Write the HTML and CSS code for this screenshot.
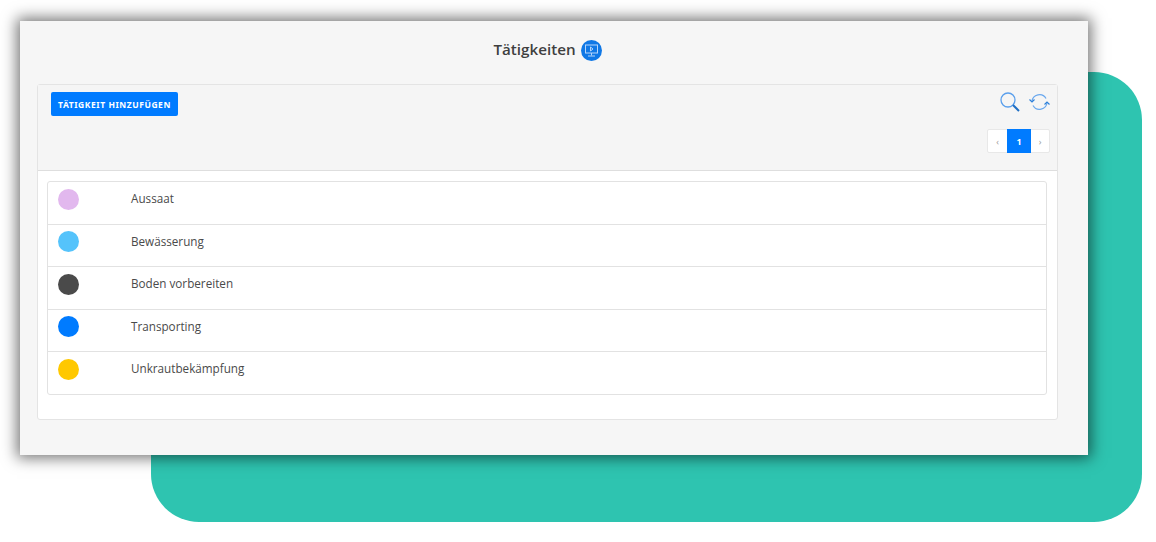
FILE: index.html
```html
<!DOCTYPE html>
<html lang="de">
<head>
    <meta charset="UTF-8">
    <title>Tätigkeiten</title>
    <link rel="stylesheet" href="styles.css">
</head>
<body>
    <div class="backdrop"></div>
    <div class="window">
        <h1 class="title">
            Tätigkeiten
            <span class="title-icon">
                <svg width="15" height="15" viewBox="0 0 15 15" fill="none" stroke="#b5d5fb" stroke-width="1">
                    <rect x="1.5" y="2" width="12" height="8"/>
                    <path d="M6.5 4l2.5 2-2.5 2zM7.5 10v2.5M4 13h7"/>
                </svg>
            </span>
        </h1>
        <div class="panel">
            <div class="panel-head">
                <button class="btn-add">TÄTIGKEIT HINZUFÜGEN</button>
                <div class="tools">
                    <div class="tool-icons">
                        <svg width="20" height="20" viewBox="0 0 20 20" fill="none" stroke="#5a9fec" stroke-width="1.3">
                            <circle cx="8" cy="8" r="7"/>
                            <path d="M13 13l6 6" stroke="#1f6fc4" stroke-width="2"/>
                        </svg>
                        <svg width="21" height="18" viewBox="0 0 21 18" fill="none" stroke="#6aa8ee" stroke-width="1.2">
                            <path d="M3 8.500a7.500 7.500 0 0 1 14-3M18 9.500a7.500 7.500 0 0 1-14 3"/>
                            <path d="M0.500 6.500l2.500 2.500 2.500-2.500M15.500 11.500l2.500-2.500 2.500 2.500" stroke="#2f80d8"/>
                        </svg>
                    </div>
                    <ul class="pager">
                        <li>‹</li>
                        <li class="current">1</li>
                        <li>›</li>
                    </ul>
                </div>
            </div>
            <div class="panel-body">
                <ul class="list">
                    <li><span class="dot dot-lilac"></span>Aussaat</li>
                    <li><span class="dot dot-sky"></span>Bewässerung</li>
                    <li><span class="dot dot-dark"></span>Boden vorbereiten</li>
                    <li><span class="dot dot-blue"></span>Transporting</li>
                    <li><span class="dot dot-yellow"></span>Unkrautbekämpfung</li>
                </ul>
            </div>
        </div>
    </div>
</body>
</html>
```

FILE: styles.css
```css
*{
    margin: 0;
    padding: 0;
    box-sizing: border-box;
}

ul{
    list-style-type: none;
}

html, body{
    height: 100%;
    overflow: hidden;
}

body{
    background: #ffffff;
    font-family: "Open Sans", "Liberation Sans", sans-serif;
    color: #4a4a4a;
    position: relative;
}

/* teal block behind the window */
.backdrop{
    position: absolute;
    left: 151px;
    top: 72px;
    width: 991px;
    height: 450px;
    background: #2ec4b0;
    border-radius: 48px;
}

.window{
    position: relative;
    width: 1068px;
    height: 434px;
    margin: 21px 0 0 20px;
    padding: 0 30px 0 17px;
    background: #f6f6f6;
    box-shadow: 0 0 14px 3px rgba(0, 0, 0, 0.55);
}

.title{
    height: 63px;
    display: flex;
    align-items: center;
    justify-content: center;
    gap: 5px;
    padding-bottom: 7px;
    font-size: 15.2px;
    font-weight: 600;
    color: #3f3f3f;
}

.title-icon{
    width: 21px;
    height: 21px;
    margin-top: 2px;
    border-radius: 50%;
    background: #1078e6;
    display: flex;
    align-items: center;
    justify-content: center;
}

.panel{
    height: 336px;
    background: #ffffff;
    border: 1px solid #e4e4e4;
    border-radius: 3px;
}

.panel-head{
    height: 86px;
    display: flex;
    justify-content: space-between;
    padding: 7px 7px 0 13px;
    background: #f5f5f5;
    border-bottom: 1px solid #dedede;
}

.btn-add{
    width: 127px;
    height: 24px;
    background: #007bff;
    border: none;
    border-radius: 2px;
    color: #ffffff;
    font-family: "Noto Sans", sans-serif;
    font-size: 8.5px;
    font-weight: 700;
    letter-spacing: 0.55px;
}

.tools{
    display: flex;
    flex-direction: column;
    align-items: flex-end;
}

.tool-icons{
    display: flex;
    align-items: center;
    gap: 9px;
    height: 20px;
}

.pager{
    display: flex;
    height: 24px;
    margin-top: 17px;
    background: #ffffff;
    border: 1px solid #e8e8e8;
    border-radius: 2px;
    font-size: 9px;
    color: #999999;
}

.pager li{
    width: 19px;
    display: flex;
    align-items: center;
    justify-content: center;
}

.pager li:last-child{
    width: 18px;
}

.pager li.current{
    width: 24px;
    margin-top: -1px;
    margin-bottom: -1px;
    background: #007bff;
    color: #ffffff;
    font-weight: 700;
}

.panel-body{
    padding: 10px 10px 0 9px;
}

.list{
    border: 1px solid #e2e2e2;
    border-radius: 3px;
}

.list li{
    height: 42.5px;
    display: flex;
    align-items: flex-start;
    padding: 7px 0 0 10px;
    font-size: 11.7px;
    line-height: 18px;
    border-top: 1px solid #e2e2e2;
}

.list li:first-child{
    height: 41.5px;
    border-top: none;
}

.dot{
    width: 21px;
    height: 21px;
    margin: -0.5px 52px 0 0;
    border-radius: 50%;
}

.list li:first-child .dot{
    margin-top: 0;
}

.dot-lilac{ background: #e2b8ee; }
.dot-sky{ background: #55c3fb; }
.dot-dark{ background: #4a4a4a; }
.dot-blue{ background: #007bff; }
.dot-yellow{ background: #ffc800; }
```
